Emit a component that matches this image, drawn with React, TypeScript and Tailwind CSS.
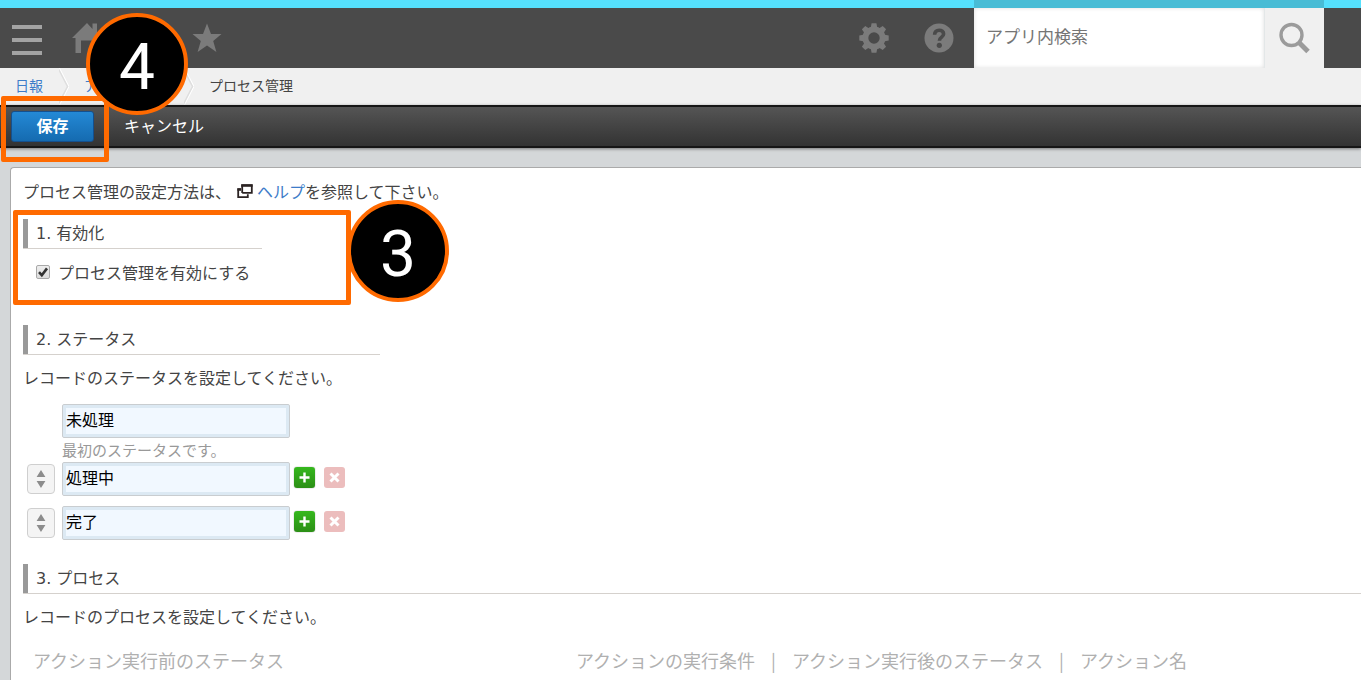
import React, { useState } from 'react';
import { clsx } from 'clsx';

const HomeIcon = () => (
  <svg width="30" height="32" viewBox="0 0 30 32" fill="currentColor" aria-hidden="true">
    <path d="M15 1 0 16h3.5v15H9V18.5h12V31h5.5V16H30l-5-5V1.5h-4.500V7z" />
  </svg>
);

const BellIcon = () => (
  <svg width="30" height="30" viewBox="0 0 30 30" fill="currentColor" aria-hidden="true">
    <path d="M15 2c-5 0-8 4-8 9v7l-3 5h22l-3-5v-7c0-5-3-9-8-9zM12 25h6c0 4-6 4-6 0z" />
  </svg>
);

const StarIcon = () => (
  <svg width="30" height="30" viewBox="0 0 30 30" fill="currentColor" aria-hidden="true">
    <path d="M15 0.5 19 11h10.5l-8.3 7 3.2 11L15 22.6 5.600 29l3.2-11L0.5 11H11z" />
  </svg>
);

const GearIcon = () => (
  <svg width="30" height="30" viewBox="0 0 30 30" fill="currentColor" aria-hidden="true">
    <path
      fillRule="evenodd"
      d="M15 3.500a11.5 11.5 0 1 0 0 23 11.5 11.5 0 0 0 0-23zm0 5.800a5.7 5.7 0 1 1 0 11.4 5.7 5.7 0 0 1 0-11.4z"
    />
    {[0, 45, 90, 135, 180, 225, 270, 315].map((deg) => (
      <path key={deg} d="M12.6 0.3h4.8l1 5h-6.800z" transform={`rotate(${deg} 15 15)`} />
    ))}
  </svg>
);

const HelpIcon = () => (
  <svg width="30" height="30" viewBox="0 0 30 30" aria-hidden="true">
    <circle cx="15" cy="15" r="14.5" fill="currentColor" />
    <path
      d="M10.6 11.8c0-3 2-4.6 4.5-4.6s4.5 1.5 4.5 3.9c0 3.2-4.2 3-4.2 6.6"
      fill="none"
      stroke="#4a4a4a"
      strokeWidth="3.6"
    />
    <circle cx="15.3" cy="22.3" r="2.6" fill="#4a4a4a" />
  </svg>
);

const SearchIcon = () => (
  <svg width="32" height="32" viewBox="0 0 32 32" fill="none" stroke="#9b9b9b" aria-hidden="true">
    <circle cx="12.500" cy="13" r="10.5" strokeWidth="3.4" />
    <path d="m20 20.5 9 9" strokeWidth="5" />
  </svg>
);

const WindowIcon = () => (
  <svg width="16" height="16" viewBox="0 0 16 16" fill="none" stroke="#2b2323" aria-hidden="true">
    <path d="M5.2 10V2.2h9.6v7.6H5.2z" strokeWidth="1.8" />
    <path d="M4.2 2.6h11.4" strokeWidth="2.4" />
    <path d="M4 6.2H1.2v8h9.6v-3" strokeWidth="1.8" />
    <path d="M0.4 6.6H4" strokeWidth="2.4" />
  </svg>
);

const SortIcon = () => (
  <svg width="10" height="18" viewBox="0 0 10 18" fill="#8c8c8c" aria-hidden="true">
    <path d="M5 0 9.4 7H0.6zM5 18 0.6 11h8.8z" />
  </svg>
);

const Crumb = ({ label }: { label: string }) => (
  <li className="flex h-full items-center">
    <a href="#" className="pb-1 text-[#3d7cc9]">{label}</a>
    <svg className="mr-[15px] ml-4" width="10" height="37" viewBox="0 0 10 37" fill="none" aria-hidden="true">
      <path d="M-1 0 8.5 18.5-1 37" stroke="#dedede" strokeWidth="1.5" />
      <path d="M0.5 0 10 18.5 0.5 37" stroke="#fff" strokeWidth="1" />
    </svg>
  </li>
);

interface SectionTitleProps {
  children: React.ReactNode;
  className?: string;
}

const SectionTitle = ({ children, className }: SectionTitleProps) => (
  <h2
    className={clsx(
      'flex h-[30px] items-center border-b border-[#d5d1cd] font-["DejaVu_Sans","Noto_Sans_CJK_JP",sans-serif]',
      className
    )}
  >
    <span className="mr-2 w-[5px] self-stretch bg-[#999]" />
    {children}
  </h2>
);

interface StatusRowProps {
  value: string;
  label: string;
  onChange: (value: string) => void;
  fixed?: boolean;
}

const StatusRow = ({ value, label, onChange, fixed }: StatusRowProps) => (
  <div className="flex items-center">
    <div className="w-[39px] pl-1">
      {!fixed && (
        <button
          type="button"
          aria-label="並べ替え"
          className="flex h-[30px] w-7 items-center justify-center rounded-sm border border-[#cfcfcf] bg-[#f4f4f4]"
        >
          <SortIcon />
        </button>
      )}
    </div>
    <input
      type="text"
      aria-label={label}
      value={value}
      onChange={(e) => onChange(e.target.value)}
      className="h-[34px] w-[228px] rounded-xs border border-[#c9cdd0] bg-[#f1f8ff] px-[3px] pb-1 text-black shadow-[inset_0_0_0_3px_#dce9f3] outline-none"
    />
    {!fixed && (
      <div className="ml-1 flex gap-[9px] pb-1">
        <button
          type="button"
          aria-label="追加"
          className="flex size-[21px] items-center justify-center rounded-[3px] bg-linear-to-b from-[#35b81d] to-[#2c8f16] shadow-[0_0_1px_#555]"
        >
          <svg width="11" height="11" viewBox="0 0 11 11" stroke="#fff" strokeWidth="2.4" aria-hidden="true">
            <path d="M5.5 0.5v10M0.5 5.5h10" />
          </svg>
        </button>
        <button
          type="button"
          aria-label="削除"
          className="flex size-[21px] items-center justify-center rounded-[3px] bg-[#ecbdbd]"
        >
          <svg width="11" height="11" viewBox="0 0 11 11" stroke="#fff" strokeWidth="3" aria-hidden="true">
            <path d="m1.5 1.5 8 8M9.5 1.5l-8 8" />
          </svg>
        </button>
      </div>
    )}
  </div>
);

const StepBadge = ({ step, className }: { step: number; className: string }) => (
  <div
    className={clsx(
      'absolute flex size-[102px] items-center justify-center rounded-full border-4 border-[#ff6a00] bg-black pt-2 font-[Roboto,sans-serif] text-[64px] leading-none text-white',
      className
    )}
  >
    {step}
  </div>
);

export default function App() {
  const [enabled, setEnabled] = useState(true);
  const [statuses, setStatuses] = useState(['未処理', '処理中', '完了']);

  const updateStatus = (index: number, value: string) =>
    setStatuses(statuses.map((s, i) => (i === index ? value : s)));

  return (
    <div className='relative flex min-h-screen flex-col overflow-hidden bg-[#d4d7d9] font-["Noto_Sans_CJK_JP",sans-serif] text-base leading-6 text-[#444]'>
      <header className="flex h-[68px] items-center border-t-8 border-[#55e0fd] bg-[#4a4a4a] pl-3 text-[#7b7b7b]">
        <button type="button" aria-label="メニュー" className="mr-[30px] flex flex-col gap-[9px] pt-[3px]">
          <span className="h-1 w-[30px] bg-[#a3a3a3]" />
          <span className="h-1 w-[30px] bg-[#a3a3a3]" />
          <span className="h-1 w-[30px] bg-[#a3a3a3]" />
        </button>
        <nav className="flex items-center gap-[30px]">
          <a href="#" aria-label="ホーム"><HomeIcon /></a>
          <a href="#" aria-label="通知"><BellIcon /></a>
          <a href="#" aria-label="お気に入り"><StarIcon /></a>
        </nav>
        <div className="ml-auto flex items-center gap-[35px]">
          <button type="button" aria-label="設定"><GearIcon /></button>
          <button type="button" aria-label="ヘルプ"><HelpIcon /></button>
        </div>
        <form className="-mt-2 mr-[37px] ml-5 flex h-[68px] border-t-8 border-[#48bcd5]">
          <input
            type="text"
            aria-label="アプリ内検索"
            placeholder="アプリ内検索"
            className="w-[290px] bg-white px-3 pb-1 text-[17px] text-[#444] shadow-[inset_0_0_4px_#ddd] outline-none placeholder:text-[#757575]"
          />
          <button type="button" aria-label="検索" className="flex w-[60px] items-center justify-center border-l border-[#e3e7e8] bg-[#f0f0f0]">
            <SearchIcon />
          </button>
        </form>
      </header>

      <nav className="h-[37px] bg-[#f0f0f0] pl-[15px] text-sm">
        <ol className="flex h-full items-center">
          <Crumb label="日報" />
          <Crumb label="アプリの設定" />
          <li className="pb-1">プロセス管理</li>
        </ol>
      </nav>

      <div className="flex h-[43px] items-center border-y-2 border-[#161616] bg-linear-to-b from-[#555] to-[#333] pl-[11px] shadow-[0_1px_3px_#777]">
        <button
          type="button"
          className="h-[31px] w-[83px] rounded-[3px] border border-[#14508f] bg-linear-to-b from-[#2489d6] to-[#156bb0] pb-1 font-bold leading-none text-white"
        >
          保存
        </button>
        <button type="button" className="ml-[30px] pb-1 text-white">キャンセル</button>
      </div>

      <main className="mt-[19px] ml-[10px] flex-1 rounded-tl border-t border-l border-[#aaa] bg-white pt-[11px] pb-6 pl-3">
        <p className="flex items-center">
          プロセス管理の設定方法は、
          <span className="mr-1 ml-1.5"><WindowIcon /></span>
          <a href="#" className="text-[#3d7cc9]">ヘルプ</a>
          を参照して下さい。
        </p>

        <section className="mt-4">
          <SectionTitle className="w-[239px]">1. 有効化</SectionTitle>
          <label className="mt-[11px] flex items-center pl-[13px]">
            <span className="relative mr-2 flex">
              <input
                type="checkbox"
                checked={enabled}
                onChange={(e) => setEnabled(e.target.checked)}
                className="size-[14px] appearance-none rounded-xs border border-[#a9a9a9] bg-linear-to-b from-[#eee] to-[#ddd]"
              />
              {enabled && (
                <svg className="pointer-events-none absolute inset-0" width="14" height="14" viewBox="0 0 14 14" fill="none" stroke="#333" strokeWidth="2.6" aria-hidden="true">
                  <path d="m3 7.2 2.8 3L11 3.4" />
                </svg>
              )}
            </span>
            プロセス管理を有効にする
          </label>
        </section>

        <section className="mt-[41px]">
          <SectionTitle className="w-[357px]">2. ステータス</SectionTitle>
          <p className="mt-[10px]">レコードのステータスを設定してください。</p>
          <div className="mt-[15px]">
            <StatusRow fixed label="最初のステータス" value={statuses[0]} onChange={(v) => updateStatus(0, v)} />
            <p className="pl-[39px] text-[15px] text-[#999]">最初のステータスです。</p>
            <div className="flex flex-col gap-[10px]">
              {statuses.slice(1).map((status, i) => (
                <StatusRow key={i} label={`ステータス ${i + 2}`} value={status} onChange={(v) => updateStatus(i + 1, v)} />
              ))}
            </div>
          </div>
        </section>

        <section className="mt-6">
          <SectionTitle>3. プロセス</SectionTitle>
          <p className="mt-[10px]">レコードのプロセスを設定してください。</p>
          <table className="mt-5 ml-[10px] text-left text-lg leading-6 whitespace-nowrap text-[#b0b0b0]">
            <thead>
              <tr>
                <th className="w-[543px] p-0 font-normal">アクション実行前のステータス</th>
                <th className="p-0 font-normal">アクションの実行条件</th>
                <th className="p-0 font-normal"><span className="px-4">|</span>アクション実行後のステータス</th>
                <th className="p-0 font-normal"><span className="px-4">|</span>アクション名</th>
              </tr>
            </thead>
          </table>
        </section>
      </main>

      {/* Step callouts */}
      <div className="pointer-events-none absolute top-24 left-px h-[66px] w-[108px] rounded-xs border-5 border-[#ff6a00]" />
      <div className="pointer-events-none absolute top-[210px] left-[13px] h-[95px] w-[338px] rounded-xs border-5 border-[#ff6a00]" />
      <StepBadge step={4} className="top-[13px] left-[86px]" />
      <StepBadge step={3} className="top-[200px] left-[347px]" />
    </div>
  );
}
